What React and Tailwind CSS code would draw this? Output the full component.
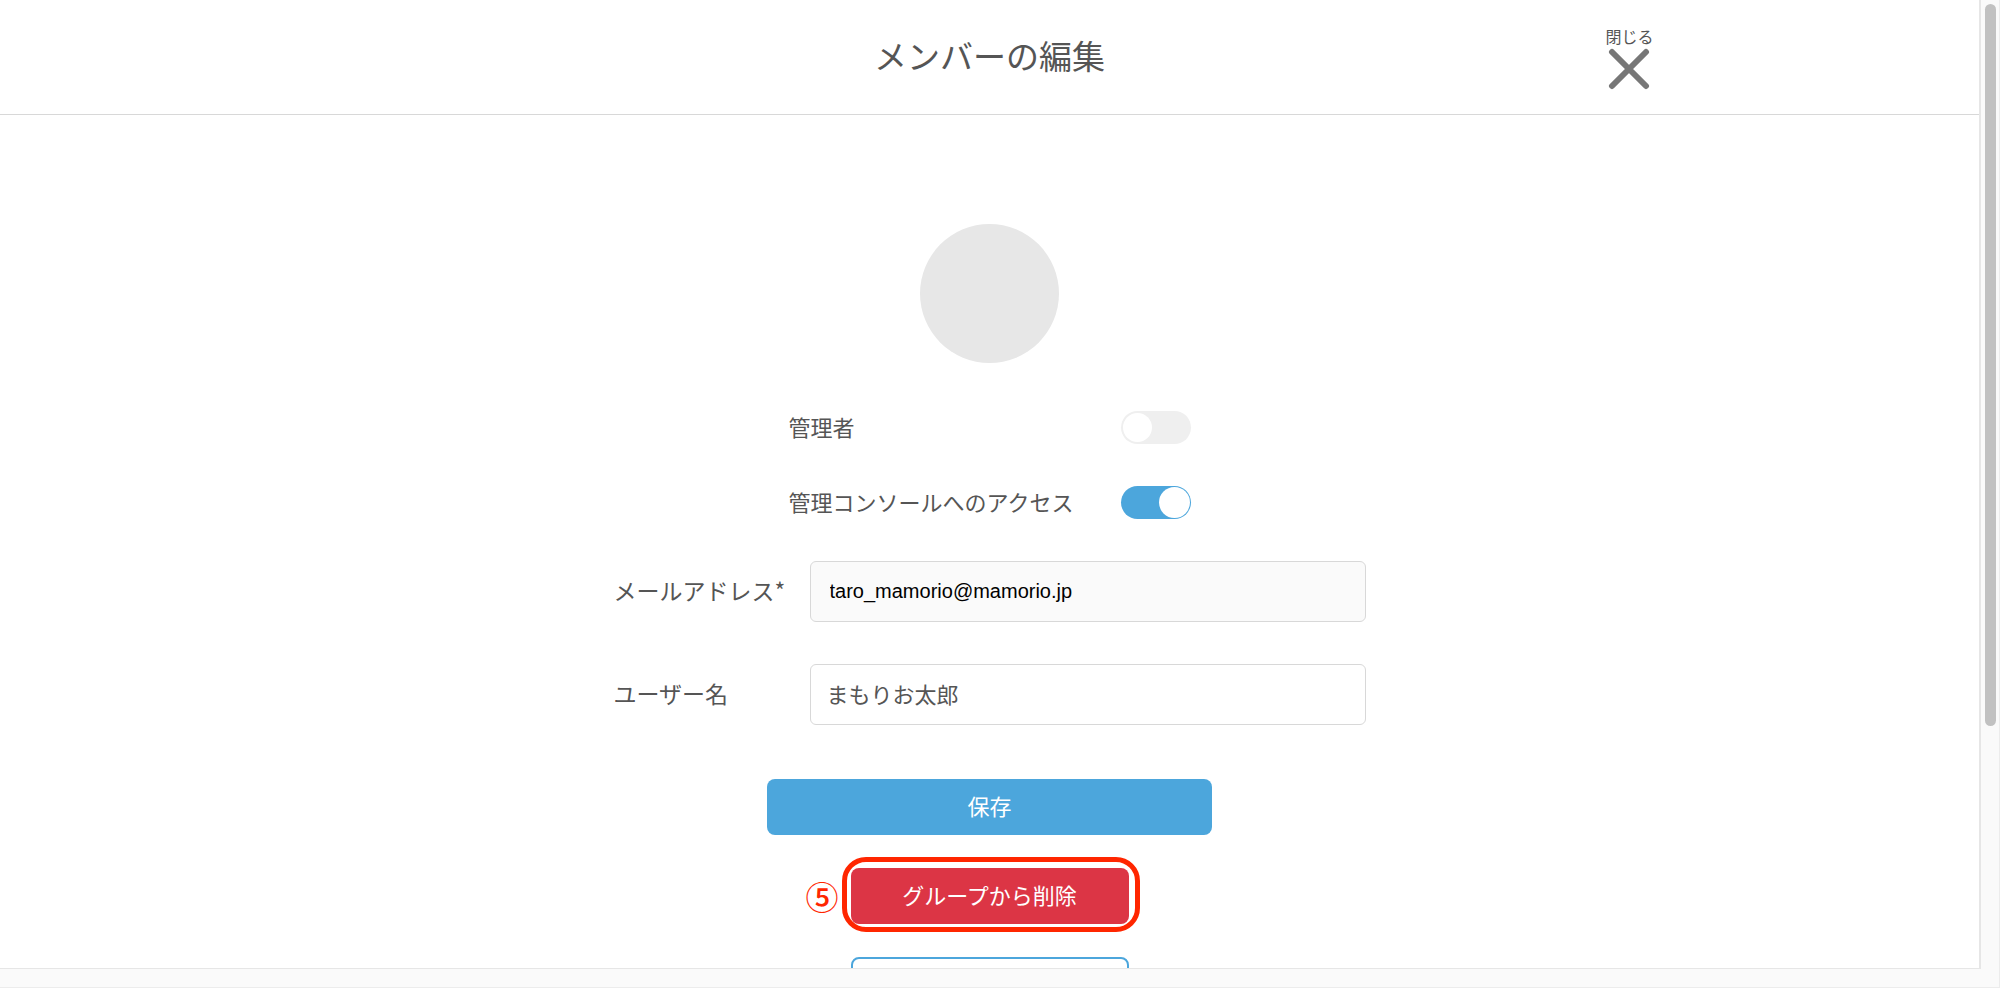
import React, { useState } from 'react';

const Toggle = ({ id, label, checked, onChange }) => (
  <div className="flex h-[33px] items-center justify-between">
    <label htmlFor={id} className="pb-1">{label}</label>
    <span className="relative block h-[33px] w-[70px]">
      <input
        id={id}
        type="checkbox"
        role="switch"
        checked={checked}
        onChange={(e) => onChange(e.target.checked)}
        className="peer block h-full w-full cursor-pointer appearance-none rounded-full bg-[#efefef] checked:bg-[#4ca6dc]"
      />
      <span className="pointer-events-none absolute top-0.5 left-0.5 size-[29px] rounded-full bg-white peer-checked:top-px peer-checked:right-px peer-checked:left-auto peer-checked:size-[31px]" />
    </span>
  </div>
);

const Field = ({ id, label, ...props }) => (
  <div className="flex items-center">
    <label htmlFor={id} className="w-[196px] shrink-0 pb-1 text-[23px]">{label}</label>
    <input
      id={id}
      className="h-[61px] min-w-0 flex-1 rounded-md border border-[#d8d8d8] bg-white px-4 pb-1 read-only:bg-[#fafafa] read-only:px-[19px] read-only:pb-0 read-only:font-['Liberation_Sans',sans-serif] read-only:text-xl read-only:text-black"
      {...props}
    />
  </div>
);

const App = () => {
  const [isAdmin, setIsAdmin] = useState(false);
  const [consoleAccess, setConsoleAccess] = useState(true);
  const [userName, setUserName] = useState('まもりお太郎');

  return (
    <div className="flex h-screen flex-col overflow-hidden border-r border-[#ececec] bg-[#fafafa] font-['Noto_Sans_CJK_JP',sans-serif] text-[22px] leading-8 text-[#555]">
      <div className="flex min-h-0 flex-1">
        <div className="min-w-0 flex-1 overflow-hidden border-r-2 border-b border-[#e6e6e6] bg-white">
          <header className="border-b border-[#d8d8d8]">
            <div className="mx-auto grid h-[114px] max-w-[1328px] grid-cols-[1fr_auto_1fr] items-center">
              <h1 className="col-start-2 pb-1 text-[33px] leading-10">メンバーの編集</h1>
              <button type="button" className="flex cursor-pointer flex-col items-center justify-self-end text-base leading-6">
                閉じる
                <svg width="42" height="42" viewBox="0 0 42 42" fill="none" stroke="#777" strokeWidth="6" strokeLinecap="round">
                  <path d="M4 4 38 38M38 4 4 38" />
                </svg>
              </button>
            </div>
          </header>

          <main className="flex flex-col items-center pt-[109px]">
            <div className="size-[139px] shrink-0 rounded-full bg-[#e7e7e7]" />

            <form className="flex w-full flex-col items-center" onSubmit={(e) => e.preventDefault()}>
              <div className="mt-12 flex w-full max-w-[402px] flex-col gap-[42px]">
                <Toggle id="admin" label="管理者" checked={isAdmin} onChange={setIsAdmin} />
                <Toggle id="console" label="管理コンソールへのアクセス" checked={consoleAccess} onChange={setConsoleAccess} />
              </div>

              <div className="mt-[42px] flex w-full max-w-[752px] flex-col gap-[42px]">
                <Field id="email" label="メールアドレス*" type="email" value="taro_mamorio@mamorio.jp" readOnly />
                <Field id="name" label="ユーザー名" type="text" value={userName} onChange={(e) => setUserName(e.target.value)} />
              </div>

              <div className="mt-[54px] flex w-full flex-col items-center gap-[33px]">
                <button type="submit" className="h-14 w-full max-w-[445px] cursor-pointer rounded-lg bg-[#4ca6dc] pb-1 text-white">
                  保存
                </button>
                <div className="relative w-full max-w-[278px]">
                  <button type="button" className="block h-14 w-full cursor-pointer rounded-lg bg-[#dc3545] pb-1 text-white">
                    グループから削除
                  </button>
                  {/* step marker around the delete button */}
                  <div className="pointer-events-none absolute -top-[11px] -right-[11px] -bottom-2 -left-[9px] rounded-3xl border-[5px] border-[#ff2600]" />
                  <span className="absolute top-3 right-full mr-3 text-[33px] font-medium text-[#ff2600]">⑤</span>
                </div>
                <button type="button" aria-label="キャンセル" className="h-14 w-full max-w-[278px] cursor-pointer rounded-lg border-2 border-[#4ca6dc] bg-white" />
              </div>
            </form>
          </main>
        </div>

        {/* scrollbar */}
        <div className="w-[18px] px-1 pt-1">
          <div className="h-[722px] w-[11px] rounded-full bg-[#c1c1c1]" />
        </div>
      </div>
      <div className="h-[19px] shrink-0 border-b border-[#ececec]" />
    </div>
  );
};

export default App;
